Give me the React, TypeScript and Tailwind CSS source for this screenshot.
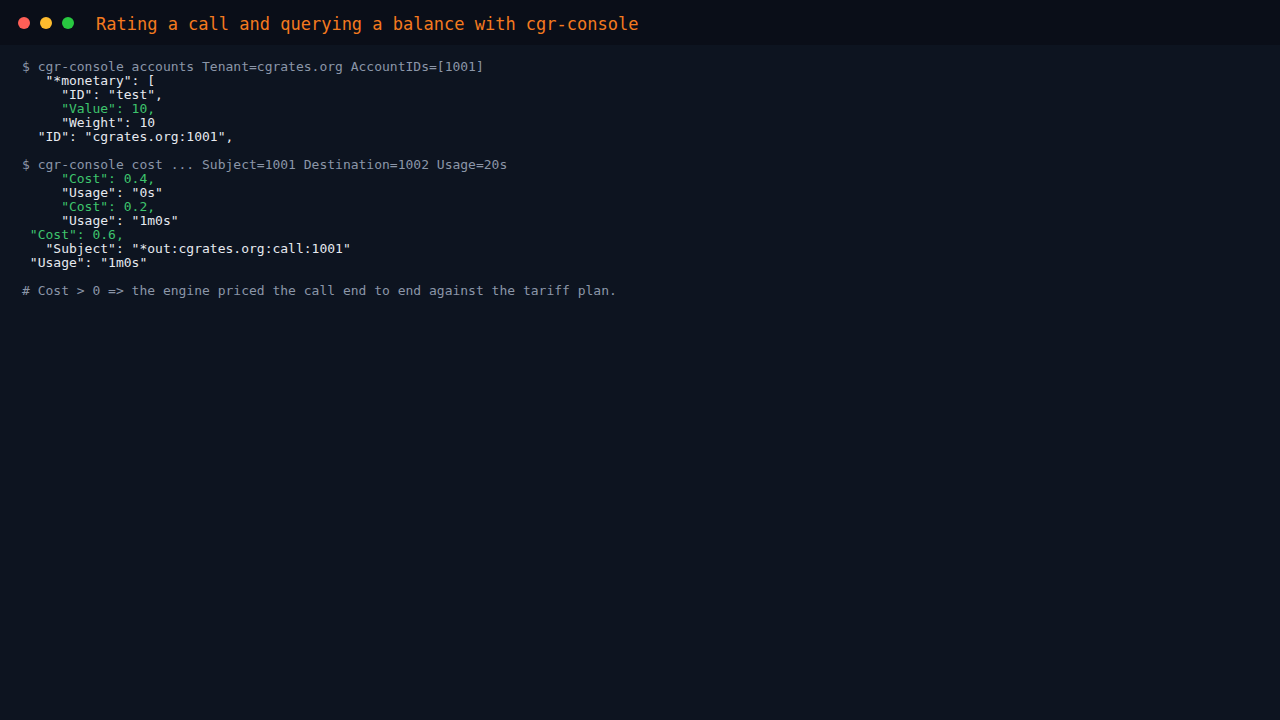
const mono = "font-['DejaVu_Sans_Mono',monospace]";

type Line = { text: string; tone: 'cmd' | 'out' | 'ok' };

const blocks: Line[][] = [
  [
    { text: '$ cgr-console accounts Tenant=cgrates.org AccountIDs=[1001]', tone: 'cmd' },
    { text: '   "*monetary": [', tone: 'out' },
    { text: '     "ID": "test",', tone: 'out' },
    { text: '     "Value": 10,', tone: 'ok' },
    { text: '     "Weight": 10', tone: 'out' },
    { text: '  "ID": "cgrates.org:1001",', tone: 'out' },
  ],
  [
    { text: '$ cgr-console cost ... Subject=1001 Destination=1002 Usage=20s', tone: 'cmd' },
    { text: '     "Cost": 0.4,', tone: 'ok' },
    { text: '     "Usage": "0s"', tone: 'out' },
    { text: '     "Cost": 0.2,', tone: 'ok' },
    { text: '     "Usage": "1m0s"', tone: 'out' },
    { text: ' "Cost": 0.6,', tone: 'ok' },
    { text: '   "Subject": "*out:cgrates.org:call:1001"', tone: 'out' },
    { text: ' "Usage": "1m0s"', tone: 'out' },
  ],
  [{ text: '# Cost > 0 => the engine priced the call end to end against the tariff plan.', tone: 'cmd' }],
];

const toneClass = {
  cmd: 'text-[#8b96a8]',
  out: 'text-[#e6e9ef]',
  ok: 'text-[#3ec46d]',
};

export default function App() {
  return (
    <div className={`w-[1280px] h-[720px] bg-[#0d1420] flex flex-col ${mono}`}>
      <div className="h-[45px] bg-[#0a0e18] flex items-center px-[18px]">
        <div className="flex gap-[10px]">
          <div className="w-[12px] h-[12px] rounded-full bg-[#ff5f57]" />
          <div className="w-[12px] h-[12px] rounded-full bg-[#febc2e]" />
          <div className="w-[12px] h-[12px] rounded-full bg-[#28c840]" />
        </div>
        <h1 className="ml-[22px] mt-[3px] text-[17px] text-[#f47a1f] leading-none">
          Rating a call and querying a balance with cgr-console
        </h1>
      </div>
      <div className="pt-[15px] pl-[22px] flex flex-col gap-[14px]">
        {blocks.map((block, i) => (
          <div key={i}>
            {block.map((line, j) => (
              <pre key={j} className={`${mono} text-[13px] leading-[14px] ${toneClass[line.tone]}`}>
                {line.text}
              </pre>
            ))}
          </div>
        ))}
      </div>
    </div>
  );
}
